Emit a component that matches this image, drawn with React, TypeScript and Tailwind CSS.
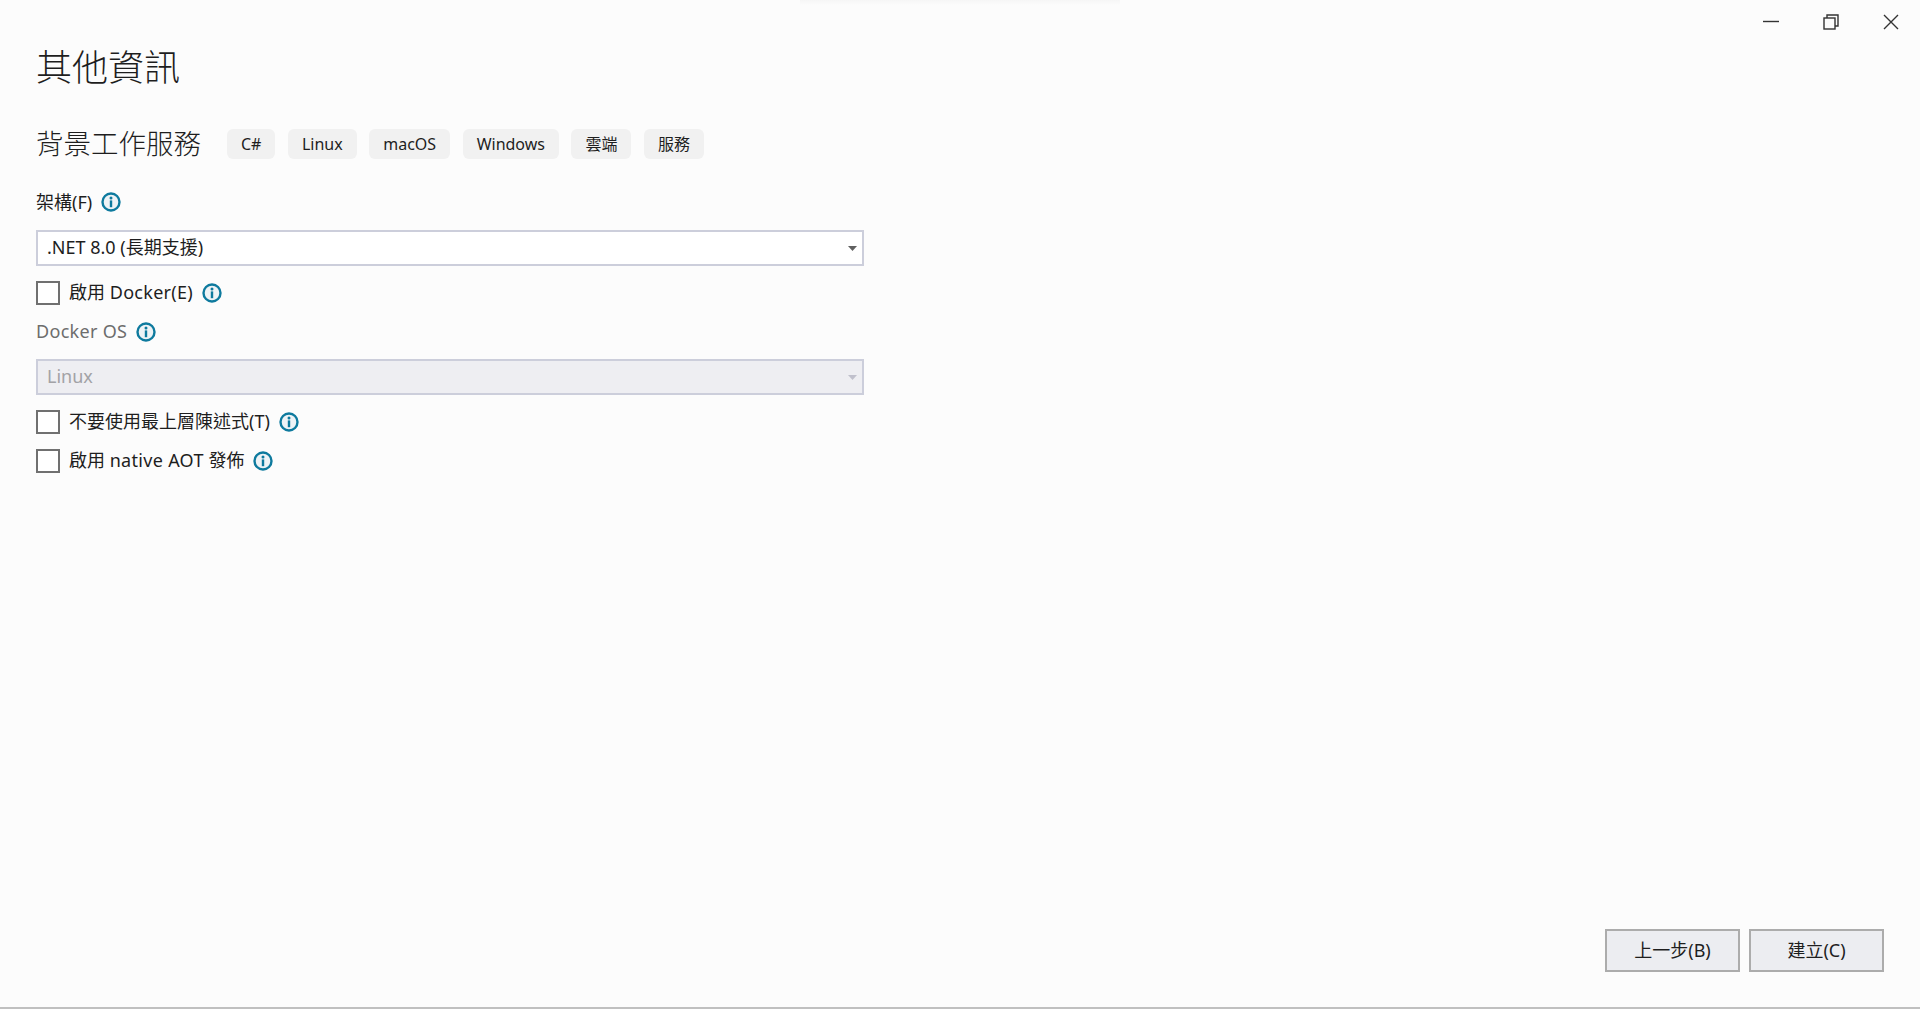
const FONT = "font-['Noto_Sans','Noto_Sans_CJK_TC',sans-serif]";
const LATIN = "tracking-[0.3px]";

function Info() {
  return (
    <svg width="20" height="20" viewBox="0 0 20 20" className="shrink-0">
      <circle cx="10" cy="10" r="8.5" fill="#eef3f6" stroke="#0e7a9e" strokeWidth="2.4" />
      <circle cx="10" cy="5.9" r="1.5" fill="#0e7a9e" />
      <rect x="8.8" y="8.4" width="2.4" height="6.8" fill="#0e7a9e" />
    </svg>
  );
}

function Arrow({ color }: { color: string }) {
  return (
    <svg width="9" height="5" viewBox="0 0 9 5" className="shrink-0">
      <polygon points="0,0 9,0 4.5,5" fill={color} />
    </svg>
  );
}

function Check({ children }: { children: React.ReactNode }) {
  return (
    <div className="flex h-6 items-center">
      <div className="box-border h-6 w-6 shrink-0 border-2 border-[#707070] bg-white" />
      <span className="ml-[9px] pb-[2px] text-[18px] leading-6 text-[#1e1e1e]">{children}</span>
      <span className="ml-[9px]"><Info /></span>
    </div>
  );
}

function Chip({ text }: { text: string }) {
  return (
    <div className="flex h-[30px] items-center rounded-[6px] bg-[#f1f1f1] px-[14px] text-[16px] text-[#1e1e1e]">
      {text}
    </div>
  );
}

function Select({ text, disabled }: { text: string; disabled?: boolean }) {
  return (
    <div
      className={
        disabled
          ? "box-border flex h-9 w-[828px] items-center justify-between border-2 border-[#ccceDB] bg-[#eeeef2] pl-[9px] pr-[5px] text-[18px] text-[#a2a2a6]"
          : "box-border flex h-9 w-[828px] items-center justify-between border-2 border-[#ccceDB] bg-white pl-[9px] pr-[5px] text-[18px] text-[#1e1e1e]"
      }
    >
      <span className="pb-[2px]">{text}</span>
      <Arrow color={disabled ? "#c0c0cc" : "#606060"} />
    </div>
  );
}

function Btn({ text }: { text: string }) {
  return (
    <div className="box-border flex h-[43px] w-[135px] items-center justify-center border-2 border-[#acacac] bg-[#ecedf1] text-[18px] text-[#1e1e1e]">
      {text}
    </div>
  );
}

export default function App() {
  return (
    <div className={`relative box-border flex h-[1009px] w-full flex-col overflow-hidden border-b-2 border-[#c0c0c0] bg-[#fcfcfc] ${FONT}`}>
      <div className="absolute left-[800px] top-0 h-[5px] w-[320px] bg-gradient-to-b from-[#f6f6f6] to-[#fcfcfc]" />
      <div className="flex h-[45px] justify-end gap-[44px] pr-[21px] pt-[14px]">
        <svg width="16" height="16" viewBox="0 0 16 16" fill="none" stroke="#333" strokeWidth="1.4">
          <path d="M0 7.5H16" />
        </svg>
        <svg width="16" height="16" viewBox="0 0 16 16" fill="none" stroke="#333" strokeWidth="1.4">
          <rect x="1" y="4" width="11" height="11" />
          <path d="M4 4V1H15V12H12" />
        </svg>
        <svg width="16" height="16" viewBox="0 0 16 16" fill="none" stroke="#333" strokeWidth="1.4">
          <path d="M1 1L15 15M15 1L1 15" />
        </svg>
      </div>

      <div className="flex flex-col pl-9">
        <div className="flex h-[45px] items-center text-[36px] font-light text-[#1e1e1e]">其他資訊</div>

        <div className="mt-[39px] flex h-[30px] items-center">
          <div className="mr-[26px] text-[27.5px] font-light text-[#1e1e1e]">背景工作服務</div>
          <div className="flex gap-[12.5px]">
            <Chip text="C#" />
            <Chip text="Linux" />
            <Chip text="macOS" />
            <Chip text="Windows" />
            <Chip text="雲端" />
            <Chip text="服務" />
          </div>
        </div>

        <div className="mt-[28px] flex h-[30px] items-center text-[18px] text-[#1e1e1e]">
          <span>架構(F)</span>
          <span className="ml-[9px]"><Info /></span>
        </div>

        <div className="mt-[13px]"><Select text=".NET 8.0 (長期支援)" /></div>

        <div className="mt-[15px]"><Check>啟用 <span className={LATIN}>Docker(E)</span></Check></div>

        <div className="mt-[12px] flex h-[30px] items-center text-[18px] text-[#6d6d6d]">
          <span className={`pb-[2px] ${LATIN}`}>Docker OS</span>
          <span className="ml-[9px]"><Info /></span>
        </div>

        <div className="mt-[12px]"><Select text="Linux" disabled /></div>

        <div className="mt-[15px]"><Check>不要使用最上層陳述式(T)</Check></div>
        <div className="mt-[15px]"><Check>啟用 <span className={LATIN}>native AOT</span> 發佈</Check></div>
      </div>

      <div className="flex-1" />

      <div className="flex justify-end gap-[9px] pb-[35px] pr-9">
        <Btn text="上一步(B)" />
        <Btn text="建立(C)" />
      </div>
    </div>
  );
}
